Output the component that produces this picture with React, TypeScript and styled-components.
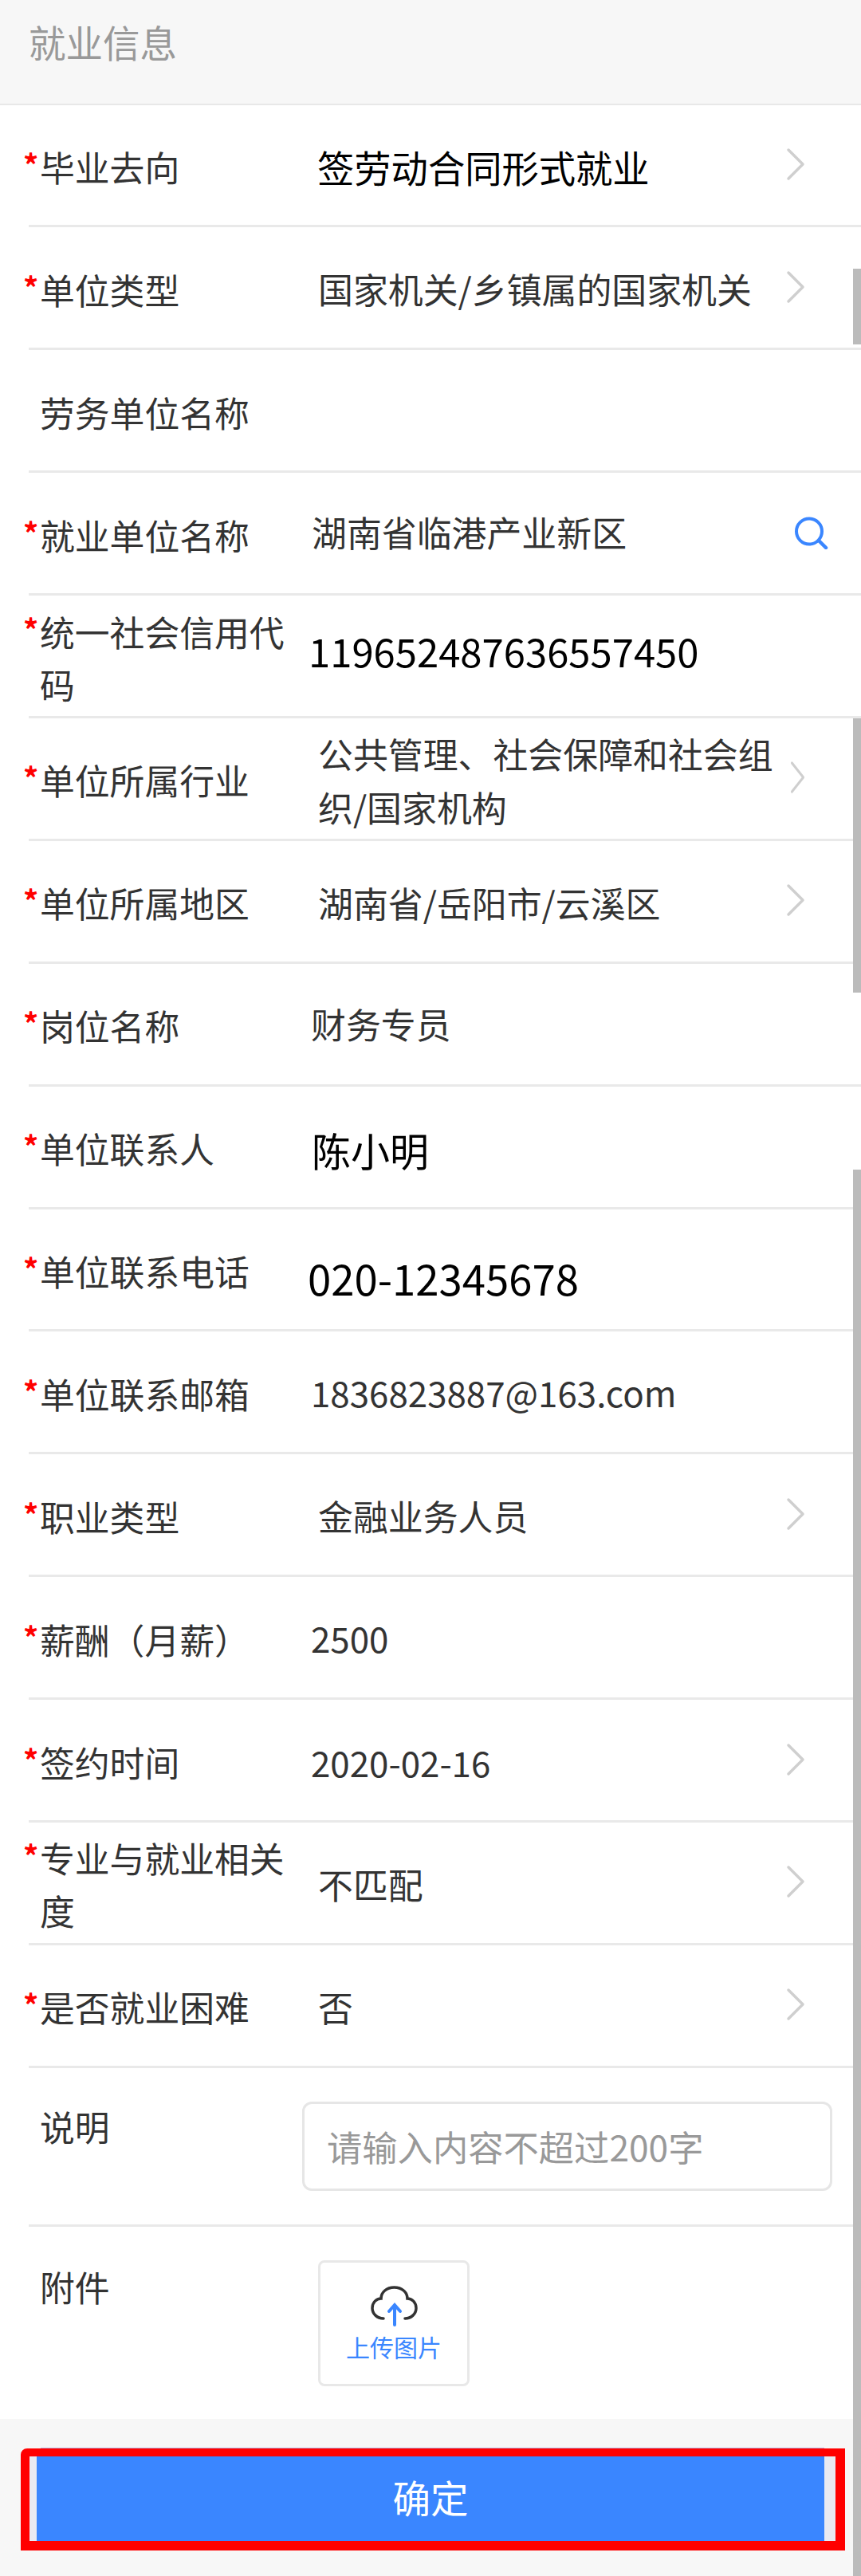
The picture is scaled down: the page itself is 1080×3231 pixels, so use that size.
import React from 'react';
import styled, { createGlobalStyle } from 'styled-components';

const Global = createGlobalStyle`
  html, body { margin: 0; padding: 0; background: #fff; }
  body { font-family: "Noto Sans CJK SC", "Noto Sans", sans-serif; }
`;
const Page = styled.div`
  position: relative;
  width: 1080px;
  height: 3231px;
  overflow: hidden;
  display: flex;
  flex-direction: column;
  background: #fff;
`;
const Header = styled.div`
  height: 131.5px;
  flex: none;
  box-sizing: border-box;
  padding: 26px 0 0 36px;
  background: #f7f7f7;
  border-bottom: 2px solid #e8e8e8;
  color: #999;
  font-size: 46.5px;
  line-height: 52px;
`;
const Row = styled.div<{ $h?: number }>`
  height: ${p => p.$h ?? 153.9}px;
  flex: none;
  box-sizing: border-box;
  margin-left: 36px;
  padding: 4px 0 0 14px;
  border-bottom: 3px solid #e9e9e9;
  display: flex;
  align-items: center;
  position: relative;
`;
const Label = styled.div<{ $required?: boolean; $top?: number }>`
  position: relative;
  width: 311px;
  flex: none;
  font-size: 43.8px;
  line-height: 66px;
  color: #333;
  ${p => p.$top ? `align-self: flex-start; margin-top: ${p.$top}px;` : ''}
  ${p => p.$required ? `&::before {
    content: '*';
    position: absolute;
    left: -21px;
    top: 5px;
    color: #f00;
    font-size: 38px;
    line-height: 50px;
    font-weight: 700;
  }` : ''}
`;
const Value = styled.div<{ $x: number; $size?: number; $dark?: boolean; $dy?: number }>`
  margin-left: ${p => p.$x - 361}px;
  margin-top: ${p => (p.$dy ?? 0) * 2}px;
  width: ${p => 982 - p.$x}px;
  flex: none;
  font-size: ${p => p.$size ?? 43.9}px;
  line-height: 67px;
  color: ${p => p.$dark ? '#000' : '#333'};
`;
const Arrow = styled.svg<{ $narrow?: boolean }>`
  position: absolute;
  right: 70px;
  top: 50%;
  margin-top: -22px;
  width: ${p => p.$narrow ? 19 : 24}px;
  height: 42px;
`;
const SearchIcon = styled.svg`
  position: absolute;
  right: 41px;
  top: 50%;
  margin-top: -21px;
  width: 43px;
  height: 41px;
`;
const Textarea = styled.div`
  margin: -4px 0 0 18px;
  width: 665px;
  height: 112px;
  box-sizing: border-box;
  border: 3px solid #e6e6e6;
  border-radius: 12px;
  padding: 0 28px;
  font-size: 44.3px;
  line-height: 106px;
  color: #999;
`;
const Upload = styled.div`
  margin: 42px 0 0 38px;
  align-self: flex-start;
  width: 190px;
  height: 158px;
  box-sizing: border-box;
  border: 3px solid #e8e8e8;
  border-radius: 8px;
  display: flex;
  flex-direction: column;
  align-items: center;
  padding-top: 29px;
`;
const UploadText = styled.div`
  margin-top: 5px;
  color: #3a86ff;
  font-size: 30px;
  line-height: 40px;
`;
const AttachRow = styled.div`
  height: 241.5px;
  flex: none;
  margin-left: 36px;
  padding-left: 14px;
  display: flex;
`;
const Footer = styled.div`
  flex: 1;
  background: #f7f7f7;
  padding: 37px 20px 0 26px;
`;
const ConfirmFrame = styled.div`
  position: relative;
  height: 128px;
  box-sizing: border-box;
  border: solid #f00;
  border-width: 10px 12px 12px 11px;
  border-top-left-radius: 8px;
  background: #e9eaf2;
  padding: 0 14px 0 9px;
  &::before {
    content: '';
    position: absolute;
    top: -11px;
    left: 14px;
    right: 14px;
    height: 1px;
    background: #b9b4e0;
  }
`;
const Confirm = styled.div`
  height: 100%;
  background: #3a86ff;
  color: #fff;
  font-size: 47.5px;
  text-align: center;
  line-height: 102px;
`;
const ScrollPiece = styled.div<{ $top: number; $h: number }>`
  position: absolute;
  right: 0;
  width: 10px;
  top: ${p => p.$top}px;
  height: ${p => p.$h}px;
  background: #bbb;
`;

const Chevron = ({ narrow }: { narrow?: boolean }) => (
  <Arrow $narrow={narrow} viewBox="0 0 24 42" preserveAspectRatio="none">
    <path d="M3 3 L21 21 L3 39" fill="none" stroke="#cfcfcf" strokeWidth="3.5" strokeLinecap="round" strokeLinejoin="round" />
  </Arrow>
);

type R = { label: string; req?: boolean; value?: string; x?: number; size?: number; dark?: boolean; arrow?: boolean; narrow?: boolean; search?: boolean; dy?: number };
const rows: R[] = [
  { label: '毕业去向', req: true, value: '签劳动合同形式就业', x: 398, size: 46.3, dark: true, arrow: true },
  { label: '单位类型', req: true, value: '国家机关/乡镇属的国家机关', x: 399, arrow: true },
  { label: '劳务单位名称' },
  { label: '就业单位名称', req: true, value: '湖南省临港产业新区', x: 391, dy: -3, search: true },
  { label: '统一社会信用代码', req: true, value: '119652487636557450', x: 387, size: 49, dark: true, dy: -9 },
  { label: '单位所属行业', req: true, value: '公共管理、社会保障和社会组织/国家机构', x: 399, arrow: true, narrow: true, dy: 1 },
  { label: '单位所属地区', req: true, value: '湖南省/岳阳市/云溪区', x: 399, arrow: true },
  { label: '岗位名称', req: true, value: '财务专员', x: 390, dy: -2 },
  { label: '单位联系人', req: true, value: '陈小明', x: 391, size: 49, dark: true, dy: 1 },
  { label: '单位联系电话', req: true, value: '020-12345678', x: 386, size: 52.7, dark: true, dy: 9 },
  { label: '单位联系邮箱', req: true, value: '1836823887@163.com', x: 390, dy: -1 },
  { label: '职业类型', req: true, value: '金融业务人员', x: 399, arrow: true },
  { label: '薪酬（月薪）', req: true, value: '2500', x: 390, dy: -1 },
  { label: '签约时间', req: true, value: '2020-02-16', x: 390, dy: 1, arrow: true },
  { label: '专业与就业相关度', req: true, value: '不匹配', x: 399, arrow: true },
  { label: '是否就业困难', req: true, value: '否', x: 399, arrow: true },
];

export default function App() {
  return (
    <Page>
      <Global />
      <Header>就业信息</Header>
      {rows.map((r, i) => (
        <Row key={i}>
          <Label $required={r.req}>{r.label}</Label>
          {r.value && <Value $x={r.x!} $size={r.size} $dark={r.dark} $dy={r.dy}>{r.value}</Value>}
          {r.arrow && <Chevron narrow={r.narrow} />}
          {r.search && (
            <SearchIcon viewBox="0 0 43 41">
              <circle cx="19" cy="18.5" r="16" fill="none" stroke="#3a86ff" strokeWidth="4" />
              <path d="M31 30 L40 39" stroke="#3a86ff" strokeWidth="4.5" strokeLinecap="round" />
            </SearchIcon>
          )}
        </Row>
      ))}
      <Row $h={199}>
        <Label $top={36}>说明</Label>
        <Textarea>请输入内容不超过200字</Textarea>
      </Row>
      <AttachRow>
        <Label $top={42}>附件</Label>
        <Upload>
          <svg width="59" height="51" viewBox="0 0 59 51">
            <path d="M16 41 C8 41 2 35 2 28 C2 21 7 16 13 16 C13 8 20 2 29.5 2 C39 2 46 8 46 16 C52 16 57 21 57 28 C57 35 51 41 43 41" fill="none" stroke="#333" strokeWidth="3.5" strokeLinecap="round" />
            <path d="M30 49 V25 M23 32 L30 24 L37 32" fill="none" stroke="#3a86ff" strokeWidth="4" strokeLinecap="round" />
          </svg>
          <UploadText>上传图片</UploadText>
        </Upload>
      </AttachRow>
      <Footer>
        <ConfirmFrame><Confirm>确定</Confirm></ConfirmFrame>
      </Footer>
      <ScrollPiece $top={337} $h={95} />
      <ScrollPiece $top={901} $h={344} />
      <ScrollPiece $top={1467} $h={1764} />
    </Page>
  );
}
